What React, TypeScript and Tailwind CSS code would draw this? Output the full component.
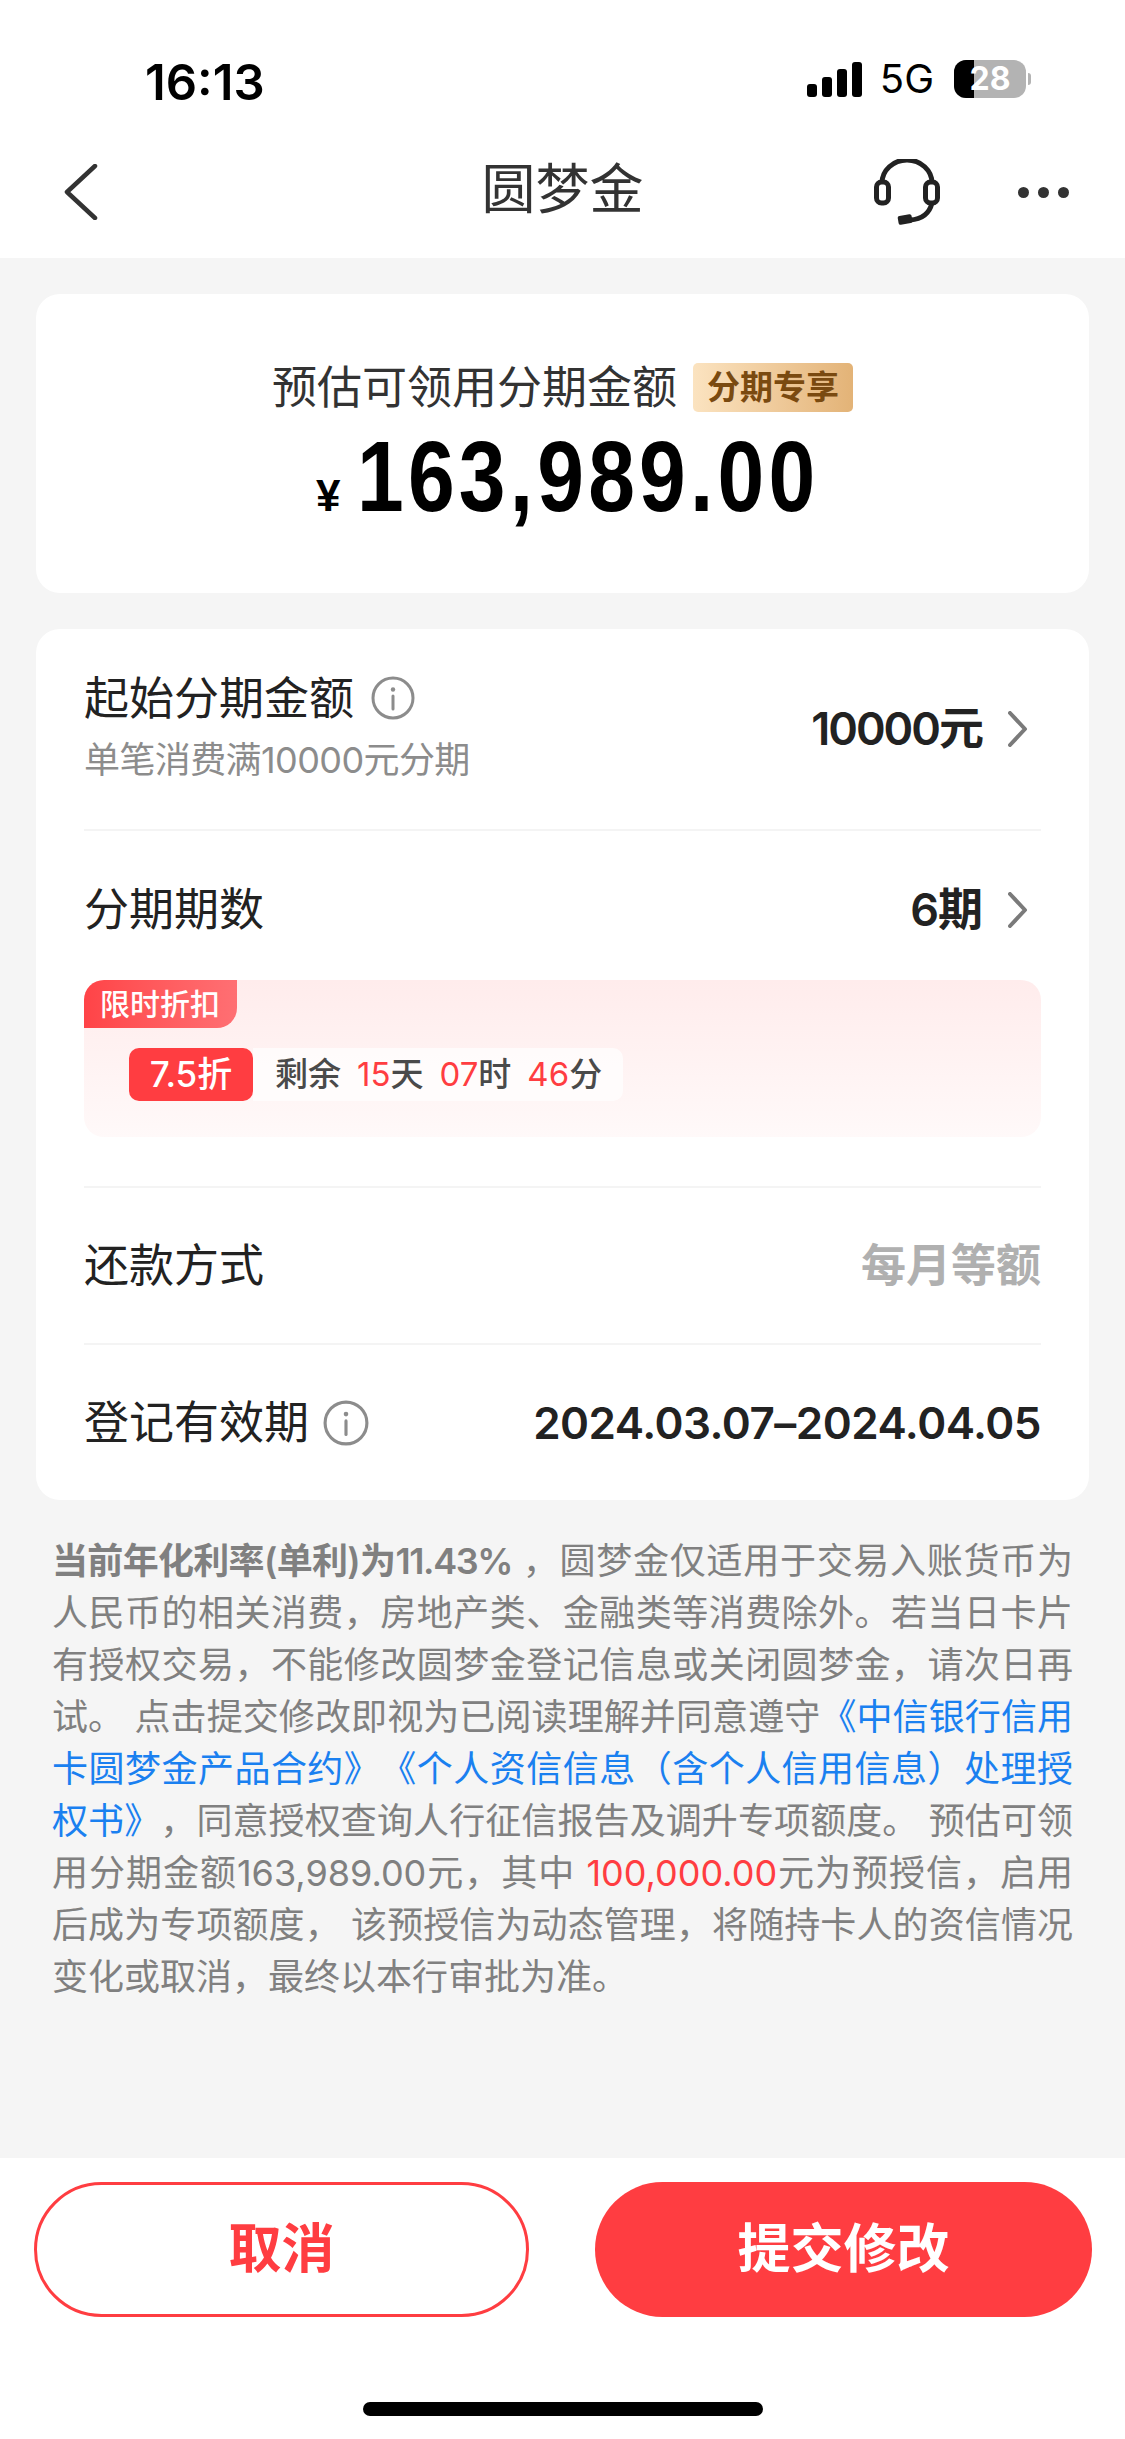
const RED = 'text-[#ff3d41]'

function InfoIcon({ className }: { className: string }) {
    return (
        <svg viewBox="0 0 44 44" className={className} fill="none">
            <circle cx="22" cy="22" r="20" stroke="#8c8c8c" strokeWidth="3" />
            <circle cx="22" cy="13.5" r="2.2" fill="#8c8c8c" />
            <path d="M22 20v13" stroke="#8c8c8c" strokeWidth="3" strokeLinecap="round" />
        </svg>
    )
}

function Chevron() {
    return (
        <svg viewBox="0 0 20 36" className="w-5 h-9" fill="none">
            <path d="M2 2l15 16L2 34" stroke="#7a7a7a" strokeWidth="4" strokeLinecap="round" strokeLinejoin="round" />
        </svg>
    )
}

function StatusBar() {
    return (
        <div className="h-[130px] flex items-start justify-between pt-[56px] pl-[145px] pr-[94px]">
            <span className="text-[49px] leading-[54px] font-semibold text-black">16:13</span>
            <div className="flex items-center h-[50px] -mt-[2px]">
                <div className="flex items-end gap-[5px] h-[36px]">
                    <div className="w-[10px] h-[13px] bg-black rounded-[3px]" />
                    <div className="w-[10px] h-[20px] bg-black rounded-[3px]" />
                    <div className="w-[10px] h-[28px] bg-black rounded-[3px]" />
                    <div className="w-[10px] h-[35px] bg-black rounded-[3px]" />
                </div>
                <span className="ml-[18px] text-[40px] leading-none text-black">5G</span>
                <div className="relative ml-[20px] w-[72px] h-[38px] rounded-[12px] bg-[#b3b3b3] overflow-hidden">
                    <div className="absolute left-0 top-0 bottom-0 w-[20px] bg-black" />
                    <span className="absolute inset-0 flex items-center justify-center text-[32px] font-bold text-white">28</span>
                </div>
                <div className="ml-[2px] w-[3px] h-[12px] rounded-r-full bg-[#b3b3b3]" />
            </div>
        </div>
    )
}

function NavBar() {
    return (
        <div className="relative h-[128px] flex items-start justify-between pl-[64px] pr-[56px]">
            <svg viewBox="0 0 34 56" className="w-[34px] h-[56px] mt-[34px]" fill="none">
                <path d="M31 2L3 28l28 26" stroke="#333" strokeWidth="4.5" strokeLinecap="round" strokeLinejoin="round" />
            </svg>
            <div className="absolute left-0 right-0 top-[26px] text-center text-[54px] leading-[68px] text-[#333]">圆梦金</div>
            <div className="flex items-start">
                <svg viewBox="0 0 66 66" className="w-[66px] h-[66px] mt-[29px]" fill="none" stroke="#222" strokeWidth="5">
                    <path d="M8 24A25 23 0 0 1 58 24" />
                    <rect x="2.5" y="23" width="12" height="21" rx="5" />
                    <rect x="51.5" y="23" width="12" height="21" rx="5" />
                    <path d="M58 44Q54 60 36 61" />
                    <rect x="24" y="56" width="14" height="9" rx="2" fill="#222" stroke="none" transform="rotate(-10 31 60)" />
                </svg>
                <div className="ml-[78px] mt-[57px] flex gap-[9px]">
                    <div className="w-[11px] h-[11px] rounded-full bg-[#333]" />
                    <div className="w-[11px] h-[11px] rounded-full bg-[#333]" />
                    <div className="w-[11px] h-[11px] rounded-full bg-[#333]" />
                </div>
            </div>
        </div>
    )
}

function AmountCard() {
    return (
        <div className="bg-white rounded-[24px] h-[299px] flex flex-col items-center pt-[69px]">
            <div className="flex items-center h-[49px]">
                <span className="text-[45px] leading-none text-[#333]">预估可领用分期金额</span>
                <span className="ml-[16px] w-[160px] h-[49px] rounded-[5px] flex items-center justify-center text-[33px] font-semibold text-[#7a4a10] bg-gradient-to-r from-[#fbe3c0] to-[#e3b377]">分期专享</span>
            </div>
            <div className="flex items-baseline ml-[7px] mt-[9px] text-black font-bold font-['Liberation_Sans',sans-serif]">
                <span className="text-[44px] w-[41px]">¥</span>
                <span className="w-[459px] origin-left scale-x-[0.84] whitespace-nowrap text-[100px] leading-[110px] tracking-[5px]">163,989.00</span>
            </div>
        </div>
    )
}

function Divider() {
    return <div className="h-[2px] bg-[#f4f4f4]" />
}

function PromoBox() {
    return (
        <div className="mt-[46px] h-[157px] rounded-[20px] bg-gradient-to-b from-[#ffecec] to-[#fff9f9]">
            <div className="w-[153px] h-[48px] pl-[16px] flex items-center rounded-tl-[20px] rounded-br-[20px] text-[30px] font-medium text-white bg-gradient-to-r from-[#ff4347] to-[#ff6f73]">限时折扣</div>
            <div className="ml-[45px] mt-[20px] flex h-[53px]">
                <div className="w-[124px] rounded-[10px] bg-[#ff3d41] flex items-center justify-center text-[35px] font-medium text-white">7.5折</div>
                <div className="w-[370px] rounded-r-[10px] bg-white/70 flex items-center pl-[22px] text-[33px] font-medium text-[#4a4a4a]">
                    <span>剩余</span>
                    <span className={`ml-[16px] font-normal ${RED}`}>15</span>
                    <span>天</span>
                    <span className={`ml-[16px] font-normal ${RED}`}>07</span>
                    <span>时</span>
                    <span className={`ml-[16px] font-normal ${RED}`}>46</span>
                    <span>分</span>
                </div>
            </div>
        </div>
    )
}

function DetailCard() {
    return (
        <div className="mt-[36px] bg-white rounded-[24px] px-[48px] text-[45px] text-[#222]">
            <div className="h-[200px] flex items-center justify-between">
                <div>
                    <div className="flex items-center h-[54px]">
                        <span className="leading-none">起始分期金额</span>
                        <InfoIcon className="ml-[17px] w-[44px] h-[44px]" />
                    </div>
                    <div className="mt-[8px] text-[36px] leading-[54px] tracking-[-0.6px] text-[#8c8c8c]">单笔消费满10000元分期</div>
                </div>
                <div className="flex items-center font-semibold">
                    <span className="tracking-[-2px]">10000元</span>
                    <span className="ml-[26px] mr-[13px]"><Chevron /></span>
                </div>
            </div>
            <Divider />
            <div className="pt-[55px]">
                <div className="flex items-center justify-between h-[48px]">
                    <span>分期期数</span>
                    <div className="flex items-center font-semibold">
                        <span className="tracking-[-1px]">6期</span>
                        <span className="ml-[26px] mr-[13px]"><Chevron /></span>
                    </div>
                </div>
                <PromoBox />
            </div>
            <div className="mt-[49px]"><Divider /></div>
            <div className="h-[155px] flex items-center justify-between">
                <span>还款方式</span>
                <span className="font-semibold text-[#b0b0b0]">每月等额</span>
            </div>
            <Divider />
            <div className="h-[155px] flex items-center justify-between">
                <div className="flex items-center">
                    <span>登记有效期</span>
                    <InfoIcon className="ml-[14px] w-[46px] h-[46px]" />
                </div>
                <span className="font-semibold text-[44px] tracking-[-0.5px]">2024.03.07–2024.04.05</span>
            </div>
        </div>
    )
}

function Notice() {
    const line = '[text-align:justify] [text-align-last:justify]'
    return (
        <div className="mt-[35px] px-[16px] text-[36px] leading-[52px] text-[#808080] [text-spacing-trim:space-all]">
            <div className={line}><span className="font-semibold tracking-[-1.4px]">当前年化利率(单利)为11.43%</span> ，圆梦金仅适用于交易入账货币为</div>
            <div className={line}>人民币的相关消费，房地产类、金融类等消费除外。若当日卡片</div>
            <div className={line}>有授权交易，不能修改圆梦金登记信息或关闭圆梦金，请次日再</div>
            <div className={line}>试。 点击提交修改即视为已阅读理解并同意遵守<span className="text-[#1a80f0]">《中信银行信用</span></div>
            <div className={`${line} text-[#1a80f0]`}>卡圆梦金产品合约》《个人资信信息（含个人信用信息）处理授</div>
            <div className={line}><span className="text-[#1a80f0]">权书》</span>，同意授权查询人行征信报告及调升专项额度。 预估可领</div>
            <div className={line}>用分期金额163,989.00元，其中 <span className={RED}>100,000.00</span>元为预授信，启用</div>
            <div className={line}>后成为专项额度， 该预授信为动态管理，将随持卡人的资信情况</div>
            <div>变化或取消，最终以本行审批为准。</div>
        </div>
    )
}

function Footer() {
    return (
        <div className="bg-white h-[281px] flex flex-col items-center">
            <div className="w-full mt-[24px] pl-[34px] pr-[33px] flex justify-between text-[53px] font-bold">
                <button className={`w-[495px] h-[135px] rounded-full border-[3px] border-[#ff3d41] ${RED}`}>取消</button>
                <button className="w-[497px] h-[135px] rounded-full bg-[#ff3d41] text-white">提交修改</button>
            </div>
            <div className="mt-[85px] w-[400px] h-[14px] rounded-full bg-black" />
        </div>
    )
}

export default function App() {
    return (
        <div className="w-[1125px] h-[2439px] flex flex-col bg-[#f5f5f5] overflow-hidden font-['Inter','Noto_Sans_CJK_SC',sans-serif]">
            <div className="bg-white h-[258px]">
                <StatusBar />
                <NavBar />
            </div>
            <div className="flex-1 px-[36px] pt-[36px]">
                <AmountCard />
                <DetailCard />
                <Notice />
            </div>
            <Footer />
        </div>
    )
}
